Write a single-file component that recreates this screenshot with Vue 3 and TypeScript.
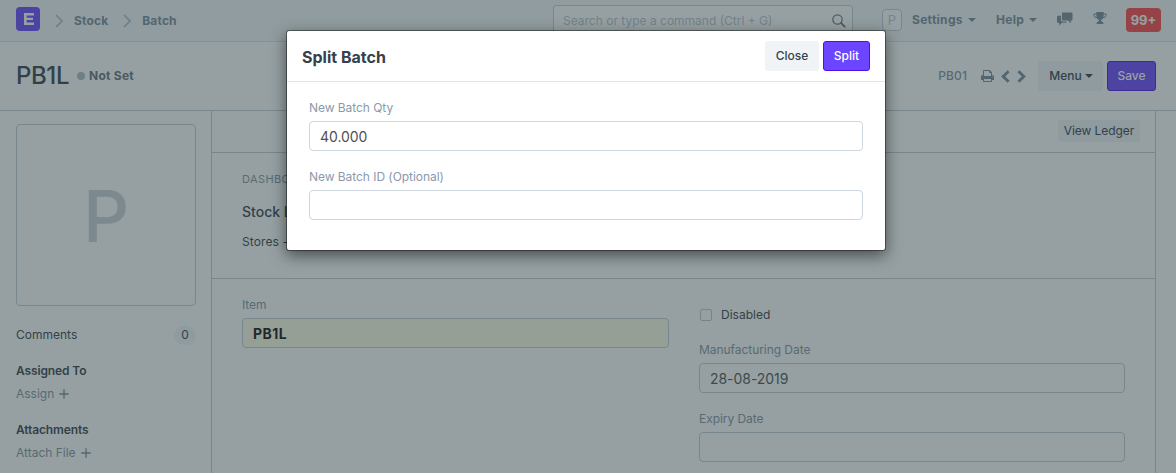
<script setup lang="ts">
import { ref } from 'vue'

interface Crumb { label: string }

const crumbs: Crumb[] = [{ label: 'Stock' }, { label: 'Batch' }]
const search = ref('')
const qty = ref('40.000')
const batchId = ref('')
const item = ref('PB1L')
const mfgDate = ref('28-08-2019')
const expiryDate = ref('')
</script>

<template>
  <div class="app">
    <header class="navbar">
      <div class="logo">
        <svg width="10" height="12" viewBox="0 0 10 12"><path d="M0 0H10V2.4H2.7V4.8H9V7.1H2.7V9.6H10V12H0Z" fill="#fff" /></svg>
      </div>
      <nav class="crumbs">
        <template v-for="c in crumbs" :key="c.label">
          <svg class="chev" width="8" height="14" viewBox="0 0 8 14"><path d="M1 1L7 7L1 13" fill="none" stroke="#b3bdc5" stroke-width="1.7" /></svg>
          <a class="crumb">{{ c.label }}</a>
        </template>
      </nav>
      <div class="search">
        <input v-model="search" placeholder="Search or type a command (Ctrl + G)" />
        <svg width="14" height="14" viewBox="0 0 14 14"><circle cx="5.5" cy="5.5" r="4.7" fill="none" stroke="#6c7680" stroke-width="1.2" /><path d="M9 9L12.7 12.7" stroke="#6c7680" stroke-width="1.8" stroke-linecap="round" /></svg>
      </div>
      <div class="avatar">P</div>
      <a class="navlink settings">Settings <i class="caret" /></a>
      <a class="navlink help">Help <i class="caret" /></a>
      <svg class="chat" width="16" height="14" viewBox="0 0 16 14">
        <path d="M6 0.5H14.5Q15.5 0.5 15.5 1.5V7.5Q15.5 8.5 14.5 8.5H13.8V11.2L11 8.5H6Q5 8.5 5 7.5V1.5Q5 .5 6 .5Z" />
        <path d="M1 3.7H4V8.2Q4 9.5 5.3 9.5H9.5V10Q9.5 10.8 8.7 10.8H5L2.2 13.4V10.8H1Q0 10.8 0 9.8V4.7Q0 3.7 1 3.7Z" />
      </svg>
      <svg class="trophy" width="14" height="12" viewBox="0 0 14 12">
        <path d="M3.3 0H10.7V1.5H13.5V3.2C13.5 5 11.8 6 10 6.2C9.3 7.2 8 7.5 8 8.7C8 9.6 10.4 9.6 10.4 11.2V12H3.6V11.2C3.6 9.6 6 9.6 6 8.7C6 7.5 4.7 7.2 4 6.2C2.2 6 .5 5 .5 3.2V1.5H3.3ZM3.3 2.5H1.5V3.2C1.5 4.1 2.4 4.9 3.6 5.1Q3.3 4 3.3 2.5ZM10.7 2.5Q10.7 4 10.4 5.1C11.6 4.9 12.5 4.1 12.5 3.2V2.5Z" />
      </svg>
      <div class="notif">99+</div>
    </header>

    <section class="pagehead">
      <h1>PB1L</h1>
      <span class="dot" />
      <span class="status">Not Set</span>
      <span class="docname">PB01</span>
      <svg class="print" width="13" height="12" viewBox="64 128 1664 1536">
        <path d="M448 1536h896v-256h-896v256zm0-640h896v-384h-160q-40 0-68-28t-28-68v-160h-640v640zm1152 64q0-26-19-45t-45-19-45 19-19 45 19 45 45 19 45-19 19-45zm128 0v416q0 13-9.500 22.500t-22.500 9.500h-224v160q0 40-28 68t-68 28h-960q-40 0-68-28t-28-68v-160h-224q-13 0-22.500-9.500t-9.500-22.500v-416q0-79 56.500-135.500t135.500-56.500h64v-544q0-40 28-68t68-28h672q40 0 88 20t76 48l152 152q28 28 48 76t20 88v256h64q79 0 135.500 56.500t56.500 135.500z" />
      </svg>
      <svg class="arrow prev" width="9" height="13" viewBox="0 0 9 13"><path d="M7.6 1.2L2.2 6.5L7.600 11.8" /></svg>
      <svg class="arrow next" width="9" height="13" viewBox="0 0 9 13"><path d="M1.4 1.2L6.8 6.5L1.4 11.8" /></svg>
      <button class="btn menu">Menu <i class="caret" /></button>
      <button class="btn primary save">Save</button>
    </section>

    <div class="body">
      <aside class="sidebar">
        <div class="photo">P</div>
        <div class="row"><span>Comments</span><span class="count">0</span></div>
        <h4>Assigned To</h4>
        <a class="add">Assign <svg width="10" height="10" viewBox="0 0 10 10"><path d="M5 .3V9.7M.3 5H9.7" /></svg></a>
        <h4 class="second">Attachments</h4>
        <a class="add">Attach File <svg width="10" height="10" viewBox="0 0 10 10"><path d="M5 .3V9.7M.3 5H9.7" /></svg></a>
      </aside>
      <main class="main">
        <div class="toolbar"><button class="ledger">View Ledger</button></div>
        <section class="dashboard">
          <div class="cap">DASHBOARD</div>
          <h3>Stock Levels</h3>
          <div class="store">Stores - PB</div>
        </section>
        <section class="form">
          <div class="col">
            <label>Item</label>
            <input v-model="item" class="input required" />
          </div>
          <div class="col right">
            <div class="check"><span class="box" />Disabled</div>
            <label>Manufacturing Date</label>
            <input v-model="mfgDate" class="input" />
            <label class="next-label">Expiry Date</label>
            <input v-model="expiryDate" class="input" />
          </div>
        </section>
      </main>
    </div>

    <div class="backdrop" />
    <div class="modal" role="dialog">
      <div class="modal-head">
        <h2>Split Batch</h2>
        <button class="btn close">Close</button>
        <button class="btn primary split">Split</button>
      </div>
      <div class="modal-body">
        <label>New Batch Qty</label>
        <input v-model="qty" class="input" />
        <label class="next-label">New Batch ID (Optional)</label>
        <input v-model="batchId" class="input" />
      </div>
    </div>
  </div>
</template>

<style>
body { margin: 0; overflow: hidden; }
</style>

<style scoped>
* { box-sizing: border-box; }
.app { position: relative; width: 100%; height: 473px; overflow: hidden; background: #fff; color: #36414c; font: 12px/18px Inter, "Liberation Sans", sans-serif; font-weight: 430; letter-spacing: 0; }
h1, h2, h3, h4 { margin: 0; }
input, button { font-family: inherit; letter-spacing: inherit; outline: none; margin: 0; }
.navbar { display: flex; height: 42px; padding: 0 15px 0 16px; background: #f2f6f9; border-bottom: 1px solid #d8e2e6; color: #6c7680; }
.logo { display: flex; align-items: center; justify-content: center; width: 24px; height: 24px; margin-top: 7px; border-radius: 4px; background: #6b45ff; padding-left: 1px; }
.crumbs { display: flex; height: 41px; align-items: center; letter-spacing: 0.15px; }
.chev { margin-left: 15px; }
.crumb { font-weight: 700; color: #788a9a; margin-left: 11px; }
.search { display: flex; width: 300px; height: 30px; margin: 5px 0 0 auto; border: 1px solid #c2cdd4; border-radius: 3px; background: #fff; align-items: center; padding: 1px 6px 0 9px; }
.search input { flex: 1; border: 0; padding: 0; background: none; font-size: 12px; letter-spacing: 0; }
.search input::placeholder { color: #b8c2cc; opacity: 1; }
.avatar { width: 20px; height: 22px; margin: 9px 10px 0 29px; border: 1px solid #c2cdd4; border-radius: 4px; background: #fff; color: #bcc6ce; font-size: 13px; text-align: center; line-height: 21px; }
.navlink { display: flex; align-items: center; height: 40px; font-weight: 700; color: #788a9a; letter-spacing: 0.3px; }
.caret { width: 0; height: 0; border: 4px solid transparent; border-top-color: currentColor; border-bottom: 0; margin-left: 5px; }
.settings { width: 84px; }
.help { width: 61px; }
.chat, .trophy { fill: #788a9a; flex: none; }
.chat { margin-top: 12px; }
.trophy { margin: 12px 19px 0 20px; }
.notif { width: 35px; height: 24px; margin-top: 8px; border-radius: 4px; background: #ff454a; color: #fff; font-weight: 700; font-size: 13px; line-height: 24px; text-align: center; }
.pagehead { display: flex; align-items: center; height: 69px; padding: 0 20px 0 16px; border-bottom: 1px solid #c2cdd4; }
h1 { font-size: 24px; font-weight: 500; letter-spacing: -0.4px; line-height: 30px; }
.dot { width: 8px; height: 8px; border-radius: 50%; background: #b1bcc6; margin: 0 4px 0 8px; }
.status { font-weight: 700; color: #67717b; letter-spacing: 0.25px; }
.docname { margin-left: auto; color: #8293a3; font-weight: 500; letter-spacing: 0.1px; }
.print { margin-left: 14px; fill: #788a9a; }
.arrow { fill: none; stroke: #788a9a; stroke-width: 2.9; }
.prev { margin-left: 7px; }
.next { margin: 0 12px 0 7px; }
.btn { display: flex; align-items: center; justify-content: center; height: 30px; border: 0; border-radius: 3px; font-size: 12px; font-weight: 500; color: #36414c; background: #f0f4f7; padding: 0 0 1px; }
.primary { background: #6b45ff; color: #fff; border: 1px solid #5210e0; }
.close, .menu { font-weight: 450; }
.menu { width: 65px; margin-right: 4px; padding-left: 1px; }
.menu .caret { margin-left: 3px; }
.save { width: 49px; }
.body { display: flex; height: 362px; padding-right: 20px; }
.sidebar { width: 211px; padding: 13px 15px 0 16px; }
.photo { height: 182px; border: 1px solid #c2cdd4; border-radius: 4px; color: #cad2d8; font-size: 72px; font-weight: 500; line-height: 182px; text-align: center; }
.row { display: flex; justify-content: space-between; align-items: center; margin-top: 19px; height: 20px; }
.count { width: 22px; height: 19px; border-radius: 10px; background: #f0f4f7; text-align: center; line-height: 18px; }
h4 { font-size: 12px; font-weight: 600; margin-top: 17px; letter-spacing: -0.12px; }
h4.second { margin-top: 18px; }
.add { display: flex; align-items: center; gap: 5px; color: #8293a3; margin-top: 5px; }
.add svg { stroke: #788a9a; stroke-width: 1.3; }
.main { flex: 1; border: solid #c2cdd4; border-width: 0 1px; }
.toolbar { display: flex; justify-content: flex-end; height: 42px; border-bottom: 1px solid #c2cdd4; padding: 9px 15px 0 0; }
.ledger { width: 82px; height: 22px; padding: 0 0 2px; border: 0; border-radius: 3px; background: #f0f4f7; color: #36414c; font-size: 12px; font-weight: 430; letter-spacing: -0.06px; }
.dashboard { height: 126px; border-bottom: 1px solid #c2cdd4; padding: 17px 30px 0; }
.cap { font-size: 11px; color: #8293a3; letter-spacing: 0.4px; }
h3 { font-size: 14px; font-weight: 500; margin-top: 14px; line-height: 20px; letter-spacing: 0; }
.store { margin-top: 11px; letter-spacing: 0.1px; }
.form { display: grid; grid-template-columns: 427px 426px; gap: 30px; padding: 17px 30px 0; }
label { display: block; color: #8293a3; letter-spacing: -0.05px; line-height: 18px; }
.input { display: block; width: 100%; height: 30px; margin-top: 4px; border: 1px solid #c2cdd4; border-radius: 4px; background: #fff; padding: 1px 10px 0; font-size: 14px; font-weight: 430; color: #505050; letter-spacing: -0.05px; }
.required { background: #fffce7; font-weight: 700; color: #111; letter-spacing: 0.5px; }
.check { display: flex; align-items: center; height: 18px; margin: 10px 0 17px; }
.box { width: 12px; height: 12px; margin: 0 9px 0 1px; border: 1.5px solid #bcc6cd; border-radius: 2px; }
.next-label { margin-top: 17px; }
.backdrop { position: absolute; inset: 0; background: #2d4245; opacity: 0.5; }
.modal { position: absolute; left: 286px; top: 30px; width: 600px; height: 221px; border: 1px solid rgba(0, 0, 0, 0.4); border-radius: 3px; background: #fff; background-clip: padding-box; box-shadow: 0 5px 15px rgba(0, 0, 0, 0.5); }
.modal label { color: #8b99ab; }
.modal .input { border-color: #cdd6de; }
.modal-head { display: flex; height: 51px; border-bottom: 1px solid #e2e5e8; padding: 10px 15px 0; }
h2 { font-size: 16px; font-weight: 650; line-height: 32px; flex: 1; letter-spacing: 0; }
.close { width: 54px; margin-right: 4px; }
.split { width: 47px; }
.modal-body { padding: 17px 22px 0; }
</style>
